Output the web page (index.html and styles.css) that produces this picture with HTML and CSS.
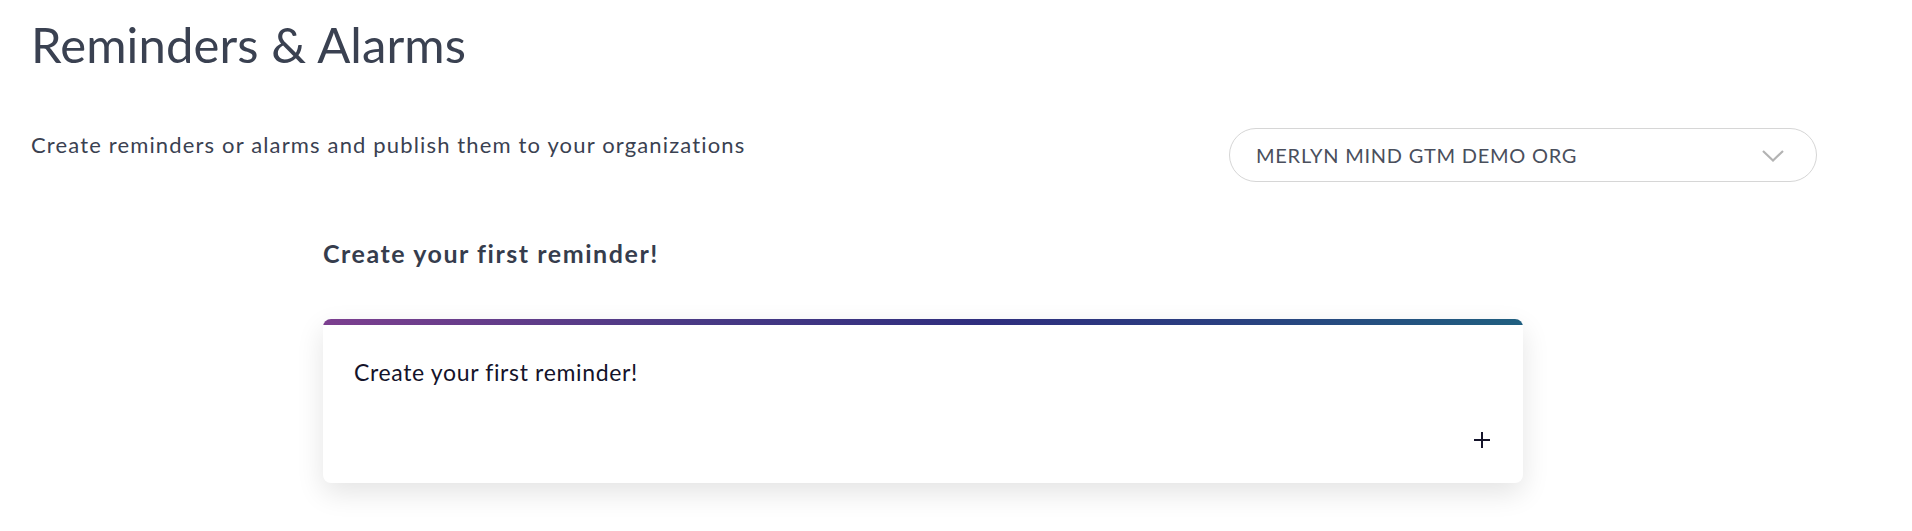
FILE: index.html
```html
<!DOCTYPE html>
<html lang="en">
<head>
<meta charset="utf-8">
<title>Reminders &amp; Alarms</title>
<link rel="stylesheet" href="styles.css">
</head>
<body>
<main class="page">
  <h1 class="title">Reminders &amp; Alarms</h1>
  <div class="intro-row">
    <p class="intro">Create reminders or alarms and publish them to your organizations</p>
    <div class="org-select">
      <span class="org-name">MERLYN MIND GTM DEMO ORG</span>
      <svg class="chevron" width="22" height="12" viewBox="0 0 22 12" aria-hidden="true">
        <path d="M1 1 L11 10.5 L21 1" fill="none" stroke="#b3b3b3" stroke-width="2.2"/>
      </svg>
    </div>
  </div>
  <section class="section">
    <h2 class="section-title">Create your first reminder!</h2>
    <div class="card">
      <div class="card-bar"></div>
      <div class="card-body">
        <p class="card-text">Create your first reminder!</p>
        <div class="card-actions">
          <svg class="plus" width="16" height="16" viewBox="0 0 16 16" aria-hidden="true">
            <path d="M8 0 V16 M0 8 H16" stroke="#15142a" stroke-width="2"/>
          </svg>
        </div>
      </div>
    </div>
  </section>
</main>
</body>
</html>
```

FILE: styles.css
```css
* { box-sizing: border-box; }
html, body { margin: 0; padding: 0; background: #ffffff; }
body {
  font-family: Lato, "Noto Sans", "Liberation Sans", sans-serif;
  color: #3b4252;
}
.page {
  padding: 14px 95px 40px 31px;
}
.title {
  margin: 0;
  font-size: 49px;
  font-weight: 400;
  line-height: 60px;
  color: #3a4151;
  letter-spacing: 0.1px;
}
.intro-row {
  display: flex;
  align-items: flex-start;
  justify-content: space-between;
  margin-top: 54px;
}
.intro {
  margin: 0;
  padding-top: 4px;
  font-size: 22px;
  line-height: 26px;
  color: #3a4151;
  letter-spacing: 1.15px;
}
.org-select {
  width: 588px;
  height: 54px;
  border: 1px solid #d6d6d6;
  border-radius: 27px;
  display: flex;
  align-items: center;
  justify-content: space-between;
  padding: 0 32px 0 26px;
}
.org-name {
  font-size: 20px;
  color: #4a4f5c;
  letter-spacing: 0.75px;
}
.chevron { display: block; margin-top: 1px; }
.section {
  margin-left: 292px;
  width: 1200px;
  margin-top: 56px;
}
.section-title {
  margin: 0;
  font-size: 25px;
  font-weight: 700;
  line-height: 30px;
  color: #363d4d;
  letter-spacing: 1.55px;
}
.card {
  margin-top: 51px;
  background: #ffffff;
  border-radius: 8px;
  box-shadow: 0 10px 28px rgba(0, 0, 0, 0.11);
  overflow: hidden;
}
.card-bar {
  height: 6px;
  background: linear-gradient(90deg, #7c3f8f 0%, #4a3a85 30%, #2f2e7e 55%, #2a3f80 75%, #205f80 100%);
}
.card-body {
  padding: 34px 33px 35px 31px;
}
.card-text {
  margin: 0;
  font-size: 23px;
  line-height: 26px;
  color: #14132a;
  letter-spacing: 0.65px;
}
.card-actions {
  display: flex;
  justify-content: flex-end;
  margin-top: 47px;
}
.plus { display: block; }
```
